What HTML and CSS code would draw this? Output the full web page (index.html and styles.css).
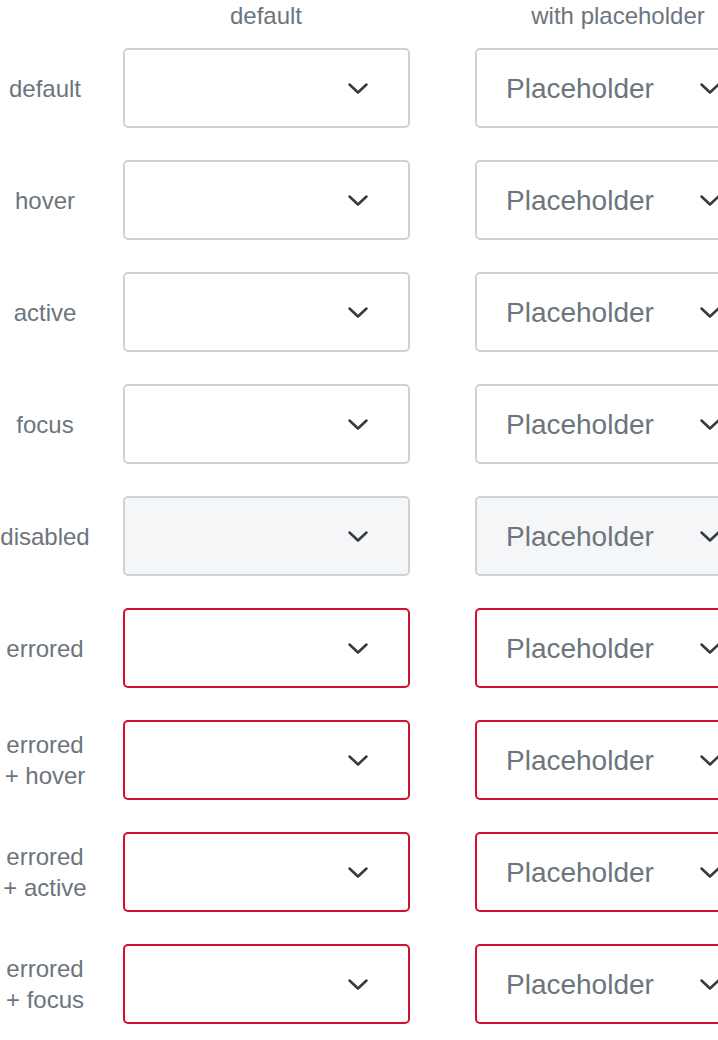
FILE: index.html
```html
<!DOCTYPE html>
<html>
<head>
<meta charset="utf-8">
<link rel="stylesheet" href="styles.css">
</head>
<body>
<div class="grid">
  <div class="head"></div>
  <div class="head">default</div>
  <div class="head">with placeholder</div>

  <div class="label">default</div>
  <div class="cell"><div class="sel"><span class="val"></span><svg class="chev" viewBox="0 0 20 20"><path d="M1.5 6.5 L10 14.5 L18.5 6.5"/></svg></div></div>
  <div class="cell"><div class="sel"><span class="val">Placeholder</span><svg class="chev" viewBox="0 0 20 20"><path d="M1.5 6.5 L10 14.5 L18.5 6.5"/></svg></div></div>

  <div class="label">hover</div>
  <div class="cell"><div class="sel"><span class="val"></span><svg class="chev" viewBox="0 0 20 20"><path d="M1.5 6.5 L10 14.5 L18.5 6.5"/></svg></div></div>
  <div class="cell"><div class="sel"><span class="val">Placeholder</span><svg class="chev" viewBox="0 0 20 20"><path d="M1.5 6.5 L10 14.5 L18.5 6.5"/></svg></div></div>

  <div class="label">active</div>
  <div class="cell"><div class="sel"><span class="val"></span><svg class="chev" viewBox="0 0 20 20"><path d="M1.5 6.5 L10 14.5 L18.5 6.5"/></svg></div></div>
  <div class="cell"><div class="sel"><span class="val">Placeholder</span><svg class="chev" viewBox="0 0 20 20"><path d="M1.5 6.5 L10 14.5 L18.5 6.5"/></svg></div></div>

  <div class="label">focus</div>
  <div class="cell"><div class="sel"><span class="val"></span><svg class="chev" viewBox="0 0 20 20"><path d="M1.5 6.5 L10 14.5 L18.5 6.5"/></svg></div></div>
  <div class="cell"><div class="sel"><span class="val">Placeholder</span><svg class="chev" viewBox="0 0 20 20"><path d="M1.5 6.5 L10 14.5 L18.5 6.5"/></svg></div></div>

  <div class="label">disabled</div>
  <div class="cell"><div class="sel disabled"><span class="val"></span><svg class="chev" viewBox="0 0 20 20"><path d="M1.5 6.5 L10 14.5 L18.5 6.5"/></svg></div></div>
  <div class="cell"><div class="sel disabled"><span class="val">Placeholder</span><svg class="chev" viewBox="0 0 20 20"><path d="M1.5 6.5 L10 14.5 L18.5 6.5"/></svg></div></div>

  <div class="label">errored</div>
  <div class="cell"><div class="sel error"><span class="val"></span><svg class="chev" viewBox="0 0 20 20"><path d="M1.5 6.5 L10 14.5 L18.5 6.5"/></svg></div></div>
  <div class="cell"><div class="sel error"><span class="val">Placeholder</span><svg class="chev" viewBox="0 0 20 20"><path d="M1.5 6.5 L10 14.5 L18.5 6.5"/></svg></div></div>

  <div class="label">errored<br>+ hover</div>
  <div class="cell"><div class="sel error"><span class="val"></span><svg class="chev" viewBox="0 0 20 20"><path d="M1.5 6.5 L10 14.5 L18.5 6.5"/></svg></div></div>
  <div class="cell"><div class="sel error"><span class="val">Placeholder</span><svg class="chev" viewBox="0 0 20 20"><path d="M1.5 6.5 L10 14.5 L18.5 6.5"/></svg></div></div>

  <div class="label">errored<br>+ active</div>
  <div class="cell"><div class="sel error"><span class="val"></span><svg class="chev" viewBox="0 0 20 20"><path d="M1.5 6.5 L10 14.5 L18.5 6.5"/></svg></div></div>
  <div class="cell"><div class="sel error"><span class="val">Placeholder</span><svg class="chev" viewBox="0 0 20 20"><path d="M1.5 6.5 L10 14.5 L18.5 6.5"/></svg></div></div>

  <div class="label">errored<br>+ focus</div>
  <div class="cell"><div class="sel error"><span class="val"></span><svg class="chev" viewBox="0 0 20 20"><path d="M1.5 6.5 L10 14.5 L18.5 6.5"/></svg></div></div>
  <div class="cell"><div class="sel error"><span class="val">Placeholder</span><svg class="chev" viewBox="0 0 20 20"><path d="M1.5 6.5 L10 14.5 L18.5 6.5"/></svg></div></div>
</div>
</body>
</html>
```
FILE: styles.css
```css
html, body {
  margin: 0;
  padding: 0;
  background: #ffffff;
  overflow: hidden;
}
body {
  font-family: "Liberation Sans", Arial, sans-serif;
  color: #6c757d;
}
.grid {
  display: grid;
  grid-template-columns: 90px 352px 352px;
  width: 794px;
}
.head {
  height: 32px;
  line-height: 32px;
  font-size: 24px;
  text-align: center;
  white-space: nowrap;
}
.label {
  height: 112px;
  display: flex;
  align-items: center;
  justify-content: center;
  text-align: center;
  font-size: 24px;
  line-height: 31px;
  white-space: nowrap;
}
.cell {
  padding: 16px 32px 16px 33px;
}
.sel {
  box-sizing: border-box;
  height: 80px;
  width: 287px;
  border: 2px solid #ced3d8;
  border-radius: 5px;
  background: #ffffff;
  display: flex;
  align-items: center;
  padding: 0 40px 0 29px;
}
.sel.disabled {
  background: #f5f6f8;
}
.sel.error {
  border-color: #d20f2b;
}
.val {
  flex: 1;
  font-size: 28px;
  line-height: 32px;
  padding-top: 2px;
  color: #6c757d;
  white-space: nowrap;
}
.chev {
  width: 20px;
  height: 20px;
  flex: none;
}
.chev path {
  fill: none;
  stroke: #343a40;
  stroke-width: 2.5;
  stroke-linecap: round;
  stroke-linejoin: round;
}
```
